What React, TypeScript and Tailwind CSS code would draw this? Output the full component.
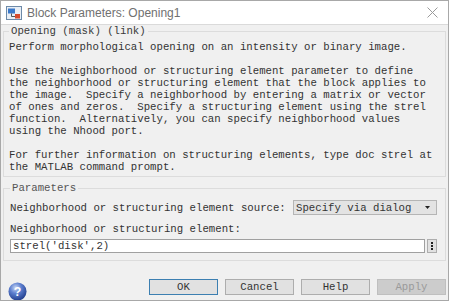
const mono = "font-['Liberation_Mono','DejaVu_Sans_Mono',monospace] text-[10.7px] leading-[12px]";

const description = `Perform morphological opening on an intensity or binary image.

Use the Neighborhood or structuring element parameter to define
the neighborhood or structuring element that the block applies to
the image.  Specify a neighborhood by entering a matrix or vector
of ones and zeros.  Specify a structuring element using the strel
function.  Alternatively, you can specify neighborhood values
using the Nhood port.

For further information on structuring elements, type doc strel at
the MATLAB command prompt.`;

const BlockIcon = () => (
  <svg width="16" height="14" viewBox="0 0 16 14">
    <rect x="0.5" y="0.5" width="15" height="13" fill="#e8eef5" stroke="#6d8aa8" />
    <rect x="2" y="2.5" width="7" height="5" fill="#3a78c9" />
    <path d="M5.5 7.5 V10.5 H9" fill="none" stroke="#555" strokeWidth="1" />
    <rect x="9" y="8" width="5" height="4.5" fill="#d84a2b" />
  </svg>
);

const HelpIcon = () => (
  <svg width="19" height="19" viewBox="0 0 20 20">
    <defs>
      <radialGradient id="hg" cx="40%" cy="30%" r="70%">
        <stop offset="0%" stopColor="#c9d8f5" />
        <stop offset="45%" stopColor="#5d7fcf" />
        <stop offset="100%" stopColor="#23408f" />
      </radialGradient>
    </defs>
    <circle cx="10" cy="10" r="9.5" fill="url(#hg)" />
    <text x="10" y="14.5" textAnchor="middle" fontSize="13" fontWeight="bold" fill="#ffffff" fontFamily="Liberation Sans, sans-serif">?</text>
  </svg>
);

const DialogButton = ({ label, primary, disabled }: { label: string; primary?: boolean; disabled?: boolean }) => (
  <div
    className={`w-[69px] h-[16px] flex items-center justify-center border ${mono} ${
      disabled
        ? 'bg-[#cccccc] border-[#bfbfbf] text-[#9a9a9a]'
        : primary
        ? 'bg-[#e1e1e1] border-[#3c7fb1] text-[#333]'
        : 'bg-[#e1e1e1] border-[#adadad] text-[#333]'
    }`}
  >
    {label}
  </div>
);

export default function App() {
  return (
    <div className="w-[449px] h-[301px] overflow-hidden bg-[#f0f0f0] border border-[#a8a8a8] flex flex-col">
      <div className="h-[24px] shrink-0 bg-white border-b border-[#dadada] flex items-center pl-[5px] pr-[10px]">
        <BlockIcon />
        <span className="ml-[5px] font-['Liberation_Sans',sans-serif] text-[12px] text-[#707070]">
          Block Parameters: Opening1
        </span>
        <div className="flex-1" />
        <svg width="11" height="11" viewBox="0 0 11 11">
          <path d="M0.5 0.5 L10.5 10.5 M10.5 0.5 L0.5 10.5" stroke="#9a9a9a" strokeWidth="1" />
        </svg>
      </div>

      <div className="px-[2px] text-[#333]">
        <fieldset className="border border-[#dcdcdc] pl-[5px] pr-[2px] pt-[4px] pb-[3px]">
          <legend className={`px-[2px] text-[#3a3a3a] ${mono}`}>Opening (mask) (link)</legend>
          <pre className={`whitespace-pre ${mono}`}>{description}</pre>
        </fieldset>

        <fieldset className="mt-[5px] border border-[#dcdcdc] pl-[6px] pr-[8px] pt-[6px] pb-[7px]">
          <legend className={`px-[2px] text-[#555] ${mono}`}>Parameters</legend>
          <div className="flex items-center h-[15px]">
            <span className={mono}>Neighborhood or structuring element source:</span>
            <div className="ml-auto w-[144px] h-[15px] bg-[#e3e3e3] border border-[#b5b5b5] flex items-center pl-[2px] pr-[6px]">
              <span className={`flex-1 ${mono}`}>Specify via dialog</span>
              <svg width="5" height="3" viewBox="0 0 5 3">
                <path d="M0 0 H5 L2.5 3 Z" fill="#222" />
              </svg>
            </div>
          </div>
          <div className={`mt-[8px] ${mono}`}>Neighborhood or structuring element:</div>
          <div className="mt-[4px] flex items-center gap-[2px]">
            <div className={`flex-1 h-[14px] bg-white border border-[#a0a0a0] pl-[2px] flex items-center ${mono}`}>
              strel('disk',2)
            </div>
            <div className="w-[10px] h-[14px] bg-[#e1e1e1] border border-[#adadad] flex flex-col items-center justify-center gap-[1px]">
              <div className="w-[2px] h-[2px] bg-[#222]" />
              <div className="w-[2px] h-[2px] bg-[#222]" />
              <div className="w-[2px] h-[2px] bg-[#222]" />
            </div>
          </div>
        </fieldset>

        <div className="mt-[18px] flex items-start">
          <div className="ml-[5px] mt-[3px]">
            <HelpIcon />
          </div>
          <div className="ml-auto flex gap-[7px]">
            <DialogButton label="OK" primary />
            <DialogButton label="Cancel" />
            <DialogButton label="Help" />
            <DialogButton label="Apply" disabled />
          </div>
        </div>
      </div>
    </div>
  );
}
